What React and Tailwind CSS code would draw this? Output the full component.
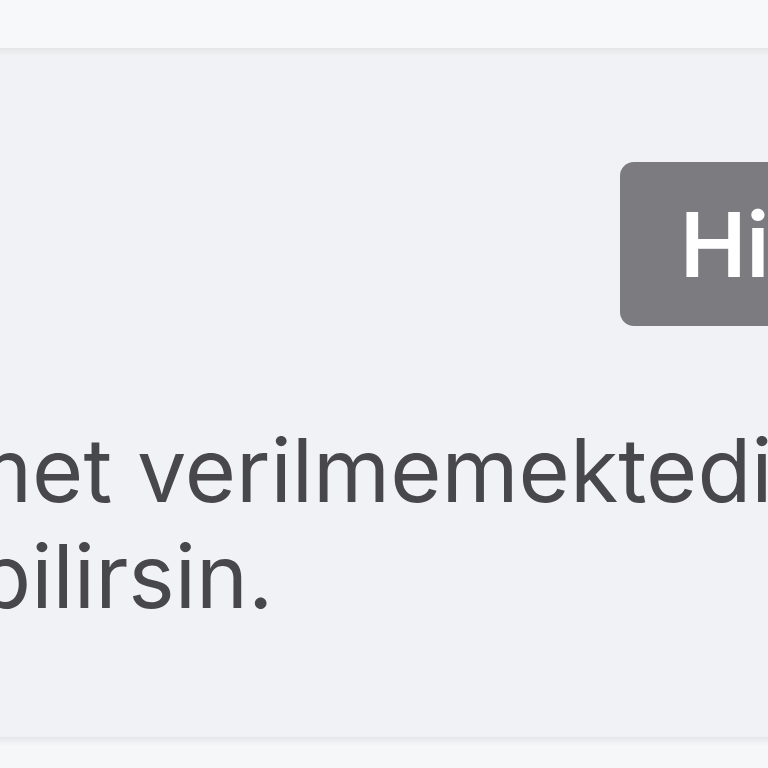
export default function App() {
  const font = { fontFamily: "Inter, 'Noto Sans', sans-serif" };
  return (
    <div className="w-[768px] h-[768px] overflow-hidden bg-[#f6f7f9] flex flex-col" style={font}>
      <div className="h-[48px] bg-[#f7f8fa] shrink-0" />
      <div className="h-[8px] shrink-0 bg-gradient-to-b from-[#e5e6e8] to-[#f1f2f4]" />
      <div className="h-[681px] shrink-0 bg-[#f1f2f6] overflow-hidden flex flex-col">
        <div className="flex justify-start pt-[106px] pl-[620px]">
          <div className="h-[164px] rounded-[14px] bg-[#7b7b80] flex items-center pl-[60px] pr-[40px] whitespace-nowrap">
            <span className="text-white text-[89px] font-semibold leading-none">Hizmet dışı</span>
          </div>
        </div>
        <div className="mt-[91px] text-[#48484c] text-[88px] leading-[106px] whitespace-nowrap">
          <div className="ml-[-45px]">met verilmemektedir.</div>
          <div className="ml-[-74px]">ebilirsin.</div>
        </div>
      </div>
      <div className="h-[8px] shrink-0 bg-gradient-to-b from-[#e5e6e8] to-[#f5f6f8]" />
    </div>
  );
}
